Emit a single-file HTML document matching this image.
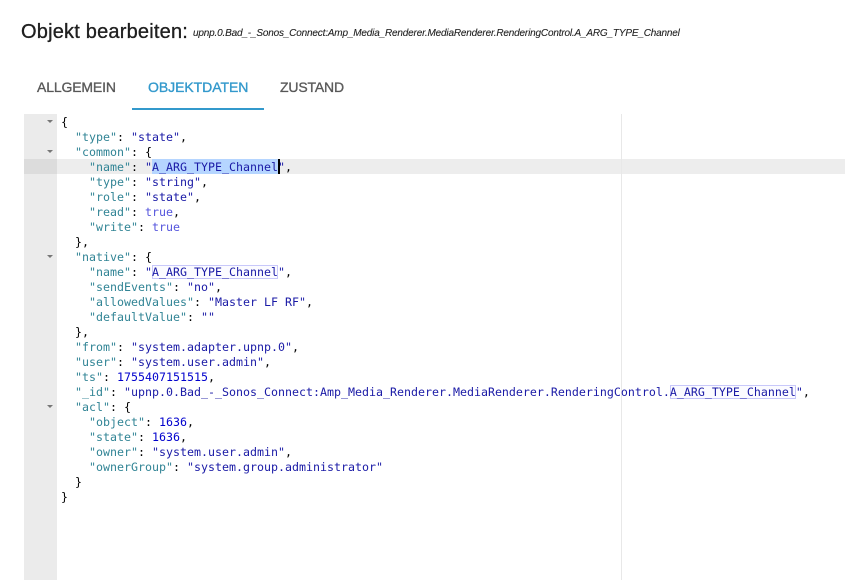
<!DOCTYPE html>
<html><head><meta charset="utf-8"><style>
html,body{margin:0;padding:0;background:#fff;width:845px;height:580px;overflow:hidden}
body{position:relative;font-family:"Liberation Sans",sans-serif}
.a{position:absolute;white-space:pre}
#t1{left:21px;top:20px;font-size:20px;line-height:24px;color:rgba(0,0,0,.87);letter-spacing:.2px;-webkit-text-stroke:.3px}
#t2{left:193px;top:27px;font-size:10px;line-height:14px;font-style:italic;color:rgba(0,0,0,.87);letter-spacing:-.176px;-webkit-text-stroke:.1px}
.tab{top:78px;font-size:14px;line-height:18px;color:rgba(0,0,0,.6);-webkit-text-stroke:.35px}
#ed{position:absolute;left:24px;top:114px;width:821px;height:466px;overflow:hidden}
#gut{position:absolute;left:0;top:0;width:33px;height:466px;background:#ebebeb}
#act{position:absolute;left:33px;top:45px;width:788px;height:15px;background:rgba(0,0,0,.07)}
#actg{position:absolute;left:0;top:45px;width:33px;height:15px;background:#dcdcdc}
#pm{position:absolute;left:597px;top:0;width:1px;height:466px;background:#e8e8e8}
.f{position:absolute;left:23px;width:0;height:0;border-left:3px solid transparent;border-right:3px solid transparent;border-top:3px solid #777}
#sel{position:absolute;left:128px;top:45px;width:126px;height:15px;background:#b5d5ff}
#cur{position:absolute;left:254px;top:45px;width:2px;height:15px;background:#000}
.m{position:absolute;height:14px;border:1px solid #c8c8fa;box-sizing:border-box;background:rgba(200,200,250,.08)}
#code{position:absolute;left:37px;top:1px;font-family:"DejaVu Sans Mono",monospace;font-size:11.63px;line-height:15px;color:#000;white-space:pre}
.k{color:#318495}.s{color:#1a1aa6}.b{color:#5555dd}.n{color:#0000cd}
</style></head><body>
<div class="a" id="t1">Objekt bearbeiten:</div>
<div class="a" id="t2">upnp.0.Bad_-_Sonos_Connect:Amp_Media_Renderer.MediaRenderer.RenderingControl.A_ARG_TYPE_Channel</div>
<div class="a tab" style="left:37px;letter-spacing:-.15px">ALLGEMEIN</div>
<div class="a tab" style="left:148px;color:#3399cc;letter-spacing:-.05px">OBJEKTDATEN</div>
<div class="a tab" style="left:280px;letter-spacing:-.17px">ZUSTAND</div>
<div class="a" style="left:132px;top:108px;width:132px;height:2px;background:#3399cc"></div>
<div id="ed">
<div id="gut"></div><div id="act"></div><div id="actg"></div><div id="pm"></div>
<div class="f" style="top:6px"></div><div class="f" style="top:36px"></div><div class="f" style="top:141px"></div><div class="f" style="top:291px"></div>
<div id="sel"></div>
<div class="m" style="left:128px;top:151px;width:126px"></div>
<div class="m" style="left:646px;top:271px;width:126px"></div>
<div id="code">{
  <span class="k">"type"</span>: <span class="s">"state"</span>,
  <span class="k">"common"</span>: {
    <span class="k">"name"</span>: <span class="s">"A_ARG_TYPE_Channel"</span>,
    <span class="k">"type"</span>: <span class="s">"string"</span>,
    <span class="k">"role"</span>: <span class="s">"state"</span>,
    <span class="k">"read"</span>: <span class="b">true</span>,
    <span class="k">"write"</span>: <span class="b">true</span>
  },
  <span class="k">"native"</span>: {
    <span class="k">"name"</span>: <span class="s">"A_ARG_TYPE_Channel"</span>,
    <span class="k">"sendEvents"</span>: <span class="s">"no"</span>,
    <span class="k">"allowedValues"</span>: <span class="s">"Master LF RF"</span>,
    <span class="k">"defaultValue"</span>: <span class="s">""</span>
  },
  <span class="k">"from"</span>: <span class="s">"system.adapter.upnp.0"</span>,
  <span class="k">"user"</span>: <span class="s">"system.user.admin"</span>,
  <span class="k">"ts"</span>: <span class="n">1755407151515</span>,
  <span class="k">"_id"</span>: <span class="s">"upnp.0.Bad_-_Sonos_Connect:Amp_Media_Renderer.MediaRenderer.RenderingControl.A_ARG_TYPE_Channel"</span>,
  <span class="k">"acl"</span>: {
    <span class="k">"object"</span>: <span class="n">1636</span>,
    <span class="k">"state"</span>: <span class="n">1636</span>,
    <span class="k">"owner"</span>: <span class="s">"system.user.admin"</span>,
    <span class="k">"ownerGroup"</span>: <span class="s">"system.group.administrator"</span>
  }
}</div>
<div id="cur"></div>
</div>
</body></html>
